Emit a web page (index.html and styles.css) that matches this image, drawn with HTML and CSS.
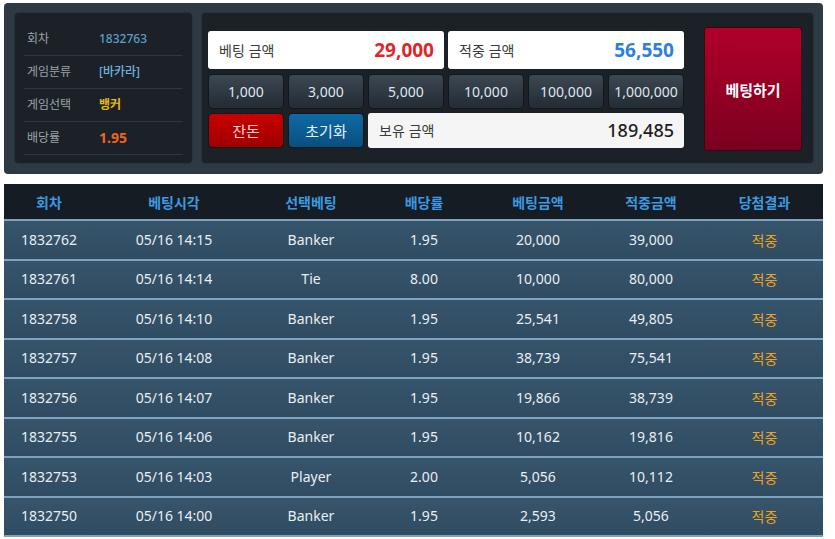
FILE: index.html
```html
<!DOCTYPE html>
<html lang="ko">
<head>
<meta charset="utf-8">
<title>베팅</title>
<link rel="stylesheet" href="styles.css">
</head>
<body>
<div class="page">
  <div class="top">
    <div class="info">
      <div class="info-row"><span class="lbl">회차</span><span class="val round">1832763</span></div>
      <div class="info-row"><span class="lbl">게임분류</span><span class="val cat">[바카라]</span></div>
      <div class="info-row"><span class="lbl">게임선택</span><span class="val pick">뱅커</span></div>
      <div class="info-row"><span class="lbl">배당률</span><span class="val odds">1.95</span></div>
    </div>
    <div class="bet">
      <div class="grid">
        <div class="box span3"><span>베팅 금액</span><b class="red">29,000</b></div>
        <div class="box span3"><span>적중 금액</span><b class="blue">56,550</b></div>
        <button class="chip">1,000</button>
        <button class="chip">3,000</button>
        <button class="chip">5,000</button>
        <button class="chip">10,000</button>
        <button class="chip">100,000</button>
        <button class="chip">1,000,000</button>
        <button class="act change">잔돈</button>
        <button class="act reset">초기화</button>
        <div class="box hold span4"><span>보유 금액</span><b class="dark">189,485</b></div>
      </div>
      <button class="go">베팅하기</button>
    </div>
  </div>
  <table class="hist">
    <colgroup>
      <col class="c1"><col class="c2"><col class="c3"><col class="c4"><col class="c5"><col class="c6"><col class="c7">
    </colgroup>
    <thead>
      <tr><th>회차</th><th>베팅시각</th><th>선택베팅</th><th>배당률</th><th>베팅금액</th><th>적중금액</th><th>당첨결과</th></tr>
    </thead>
    <tbody>
      <tr><td>1832762</td><td>05/16 14:15</td><td>Banker</td><td>1.95</td><td>20,000</td><td>39,000</td><td class="win">적중</td></tr>
      <tr><td>1832761</td><td>05/16 14:14</td><td>Tie</td><td>8.00</td><td>10,000</td><td>80,000</td><td class="win">적중</td></tr>
      <tr><td>1832758</td><td>05/16 14:10</td><td>Banker</td><td>1.95</td><td>25,541</td><td>49,805</td><td class="win">적중</td></tr>
      <tr><td>1832757</td><td>05/16 14:08</td><td>Banker</td><td>1.95</td><td>38,739</td><td>75,541</td><td class="win">적중</td></tr>
      <tr><td>1832756</td><td>05/16 14:07</td><td>Banker</td><td>1.95</td><td>19,866</td><td>38,739</td><td class="win">적중</td></tr>
      <tr><td>1832755</td><td>05/16 14:06</td><td>Banker</td><td>1.95</td><td>10,162</td><td>19,816</td><td class="win">적중</td></tr>
      <tr><td>1832753</td><td>05/16 14:03</td><td>Player</td><td>2.00</td><td>5,056</td><td>10,112</td><td class="win">적중</td></tr>
      <tr><td>1832750</td><td>05/16 14:00</td><td>Banker</td><td>1.95</td><td>2,593</td><td>5,056</td><td class="win">적중</td></tr>
    </tbody>
  </table>
</div>
</body>
</html>
```

FILE: styles.css
```css
* { box-sizing: border-box; }
html, body {
  margin: 0;
  padding: 0;
  background: #ffffff;
  font-family: "Noto Sans", "Noto Sans CJK KR", sans-serif;
  overflow: hidden;
}
.page {
  padding: 3px 12px 0 4px;
  width: 835px;
}
.top {
  display: flex;
  gap: 10px;
  width: 819px;
  height: 171px;
  padding: 10px 10px 11px 11px;
  background: #2d3943;
  border-radius: 4px;
}
.info {
  width: 178px;
  background: #1b2127;
  border-radius: 4px;
  padding: 10px 9px 8px 9px;
  box-shadow: 0 0 2px rgba(0,0,0,0.4);
}
.info-row {
  display: flex;
  align-items: center;
  height: 33px;
  border-bottom: 1px solid #2f3840;
  font-size: 12px;
  line-height: 16px;
}
.lbl {
  width: 75px;
  padding-left: 3px;
  color: #9aa3aa;
}
.val { font-weight: 500; }
.round { color: #5a9fc9; }
.cat { color: #6fb0dc; }
.pick { color: #e8b818; font-weight: 700; }
.odds { color: #f0641e; font-weight: 700; font-size: 14px; }

.bet {
  flex: 1;
  display: flex;
  align-items: center;
  background: #1b2127;
  border-radius: 4px;
  padding: 2px 11px 0 6px;
  box-shadow: 0 0 2px rgba(0,0,0,0.4);
}
.grid {
  display: grid;
  grid-template-columns: repeat(6, 76px);
  grid-template-rows: 38px 35px 34px;
  column-gap: 4px;
  row-gap: 5px;
  width: 476px;
}
.grid > :nth-child(n+9) { margin-top: -1px; }
.span3 { grid-column: span 3; }
.span4 { grid-column: span 4; }
.box {
  display: flex;
  align-items: center;
  justify-content: space-between;
  background: #ffffff;
  border-radius: 3px;
  padding: 0 10px 0 11px;
}
.box span {
  font-family: "Noto Sans CJK KR", sans-serif;
  font-size: 14px;
  color: #3a3a3a;
  line-height: 18px;
}
.box b {
  font-size: 19px;
  line-height: 22px;
  font-weight: 700;
}
.red { color: #e0262b; }
.blue { color: #2f7fdc; }
.hold { background: #f5f5f5; }
.hold b.dark {
  color: #1e1e1e;
  font-weight: 500;
  font-size: 18px;
}
button {
  font-family: "Noto Sans", "Noto Sans CJK KR", sans-serif;
  margin: 0;
  cursor: pointer;
}
.chip {
  border: 1px solid #12171b;
  border-radius: 4px;
  background: linear-gradient(#3c4853, #232b33);
  color: #dfe5ea;
  font-size: 14px;
  padding: 0;
}
.act {
  border: 1px solid #12171b;
  border-radius: 4px;
  font-size: 15px;
  padding: 0;
  font-family: "Noto Sans CJK KR", sans-serif;
}
.change {
  background: linear-gradient(#c80000, #a00000);
  color: #ffd8d8;
}
.reset {
  background: linear-gradient(#0f6aa5, #0a4f80);
  color: #e2f1fb;
}
.go {
  margin-left: 20px;
  width: 98px;
  height: 124px;
  border: 1px solid #3a0610;
  border-radius: 3px;
  background: linear-gradient(#b0002a, #7a0020);
  color: #ffffff;
  font-family: "Noto Sans CJK KR", sans-serif;
  font-weight: 700;
  font-size: 15px;
}

.hist {
  margin-top: 10px;
  width: 819px;
  border-collapse: collapse;
  table-layout: fixed;
  font-size: 14px;
}
.c1 { width: 90px; }
.c2 { width: 160px; }
.c3 { width: 114px; }
.c4 { width: 112px; }
.c5 { width: 116px; }
.c6 { width: 110px; }
.c7 { width: 117px; }
.hist th {
  height: 36px;
  background: #151c23;
  color: #3c9ae0;
  font-family: "Noto Sans CJK KR", sans-serif;
  font-weight: 700;
  font-size: 14px;
  text-align: center;
  padding: 0;
  border-bottom: 2px solid #7fa3be;
}
.hist td {
  height: 39.5px;
  padding: 0;
  text-align: center;
  color: #e8eef3;
  background: linear-gradient(#36546b, #304c62);
  border-bottom: 2px solid #7fa3be;
  line-height: 18px;
}
.hist td.win {
  color: #f0a21c;
  font-family: "Noto Sans CJK KR", sans-serif;
}
```
